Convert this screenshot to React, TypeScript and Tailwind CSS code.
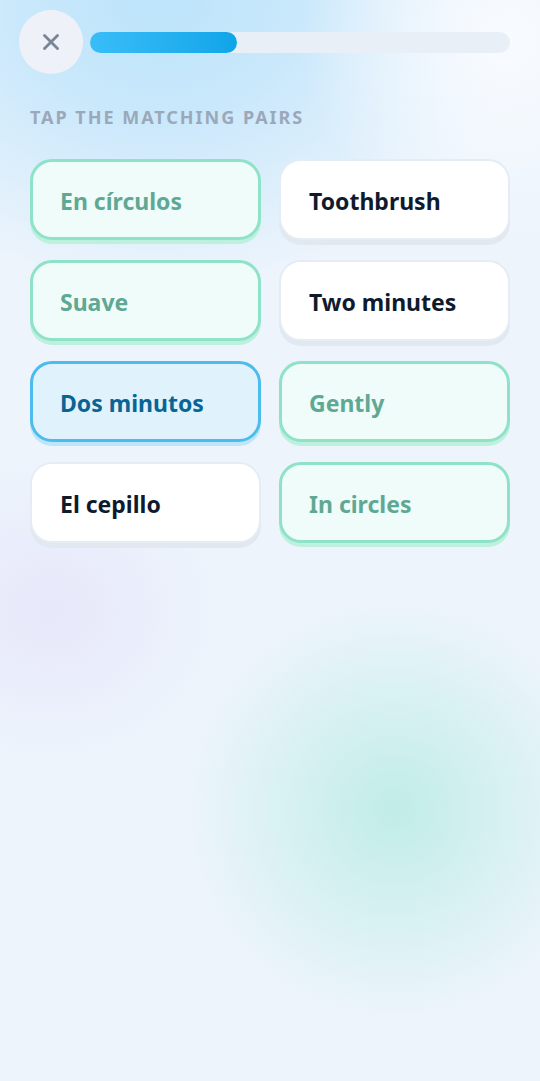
import { X } from "lucide-react";

type Tone = "matched" | "idle" | "selected";

const cards: { text: string; tone: Tone }[] = [
  { text: "En círculos", tone: "matched" },
  { text: "Toothbrush", tone: "idle" },
  { text: "Suave", tone: "matched" },
  { text: "Two minutes", tone: "idle" },
  { text: "Dos minutos", tone: "selected" },
  { text: "Gently", tone: "matched" },
  { text: "El cepillo", tone: "idle" },
  { text: "In circles", tone: "matched" },
];

const toneClass: Record<Tone, string> = {
  matched:
    "px-[27px] bg-[#effcf9] border-[3px] border-[#8ee2c7] text-[#5fa894] shadow-[0_4px_0_#bdf0dd]",
  idle: "px-[28px] bg-white border-2 border-[#e6ecf3] text-[#0f1b2d] shadow-[0_5px_0_#e2e8f0]",
  selected:
    "px-[27px] bg-[#e0f3fd] border-[3px] border-[#4cbcec] text-[#0a6494] shadow-[0_4px_0_#bfe6f8]",
};

export default function App() {
  return (
    <main
      className="min-h-[1081px] w-full bg-[#edf4fc] bg-[image:radial-gradient(ellipse_200px_200px_at_500px_40px,#f8fbff_0%,rgba(248,251,255,0)_100%),radial-gradient(ellipse_360px_290px_at_160px_0px,#bce4fb_0%,#cae8fb_40%,rgba(237,244,252,0)_100%),radial-gradient(ellipse_170px_150px_at_50px_610px,#e7e7fa_0%,rgba(237,244,252,0)_100%),radial-gradient(ellipse_210px_210px_at_395px_810px,#c0ece8_0%,#d2f0ef_40%,rgba(237,244,252,0)_100%)] px-[30px]"
      style={{ fontFamily: "'Noto Sans', Lato, sans-serif" }}
    >
      {/* header */}
      <div className="flex items-center gap-[7px] pt-[10px] -ml-[11px]">
        <button className="flex h-[64px] w-[64px] items-center justify-center rounded-full bg-[#eef2f8]">
          <X className="h-[26px] w-[26px] text-[#7a8696]" strokeWidth={2.6} />
        </button>
        <div className="h-[21px] flex-1 rounded-full bg-[#e9eff7]">
          <div className="h-full w-[147px] rounded-full bg-gradient-to-r from-[#38bdf8] to-[#0ea5e9]" />
        </div>
      </div>

      <p className="mt-[31px] text-[18px] leading-[24px] font-bold uppercase tracking-[0.11em] text-[#9aa8b9]">
        Tap the matching pairs
      </p>

      <div className="mt-[30px] grid grid-cols-2 gap-x-[18px] gap-y-[20px]">
        {cards.map((c) => (
          <div
            key={c.text}
            className={`flex h-[81px] items-center rounded-[22px] pt-[3px] text-[23px] font-bold ${toneClass[c.tone]}`}
          >
            {c.text}
          </div>
        ))}
      </div>
    </main>
  );
}
